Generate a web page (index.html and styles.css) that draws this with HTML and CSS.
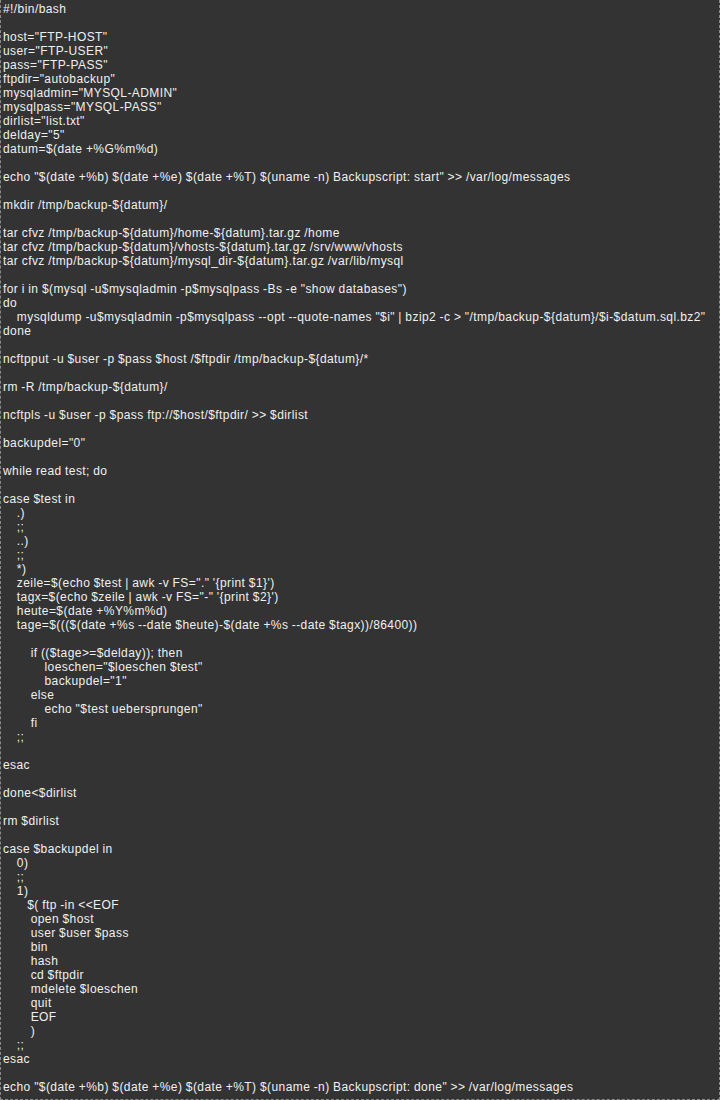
FILE: index.html
```html
<!DOCTYPE html>
<html>
<head>
<meta charset="utf-8">
<link rel="stylesheet" href="styles.css">
</head>
<body>
<div class="code-box"><pre class="code">#!/bin/bash

host="FTP-HOST"
user="FTP-USER"
pass="FTP-PASS"
ftpdir="autobackup"
mysqladmin="MYSQL-ADMIN"
mysqlpass="MYSQL-PASS"
dirlist="list.txt"
delday="5"
datum=$(date +%G%m%d)

echo "$(date +%b) $(date +%e) $(date +%T) $(uname -n) Backupscript: start" &gt;&gt; /var/log/messages

mkdir /tmp/backup-${datum}/

tar cfvz /tmp/backup-${datum}/home-${datum}.tar.gz /home
tar cfvz /tmp/backup-${datum}/vhosts-${datum}.tar.gz /srv/www/vhosts
tar cfvz /tmp/backup-${datum}/mysql_dir-${datum}.tar.gz /var/lib/mysql

for i in $(mysql -u$mysqladmin -p$mysqlpass -Bs -e "show databases")
do
    mysqldump -u$mysqladmin -p$mysqlpass --opt --quote-names "$i" | bzip2 -c &gt; "/tmp/backup-${datum}/$i-$datum.sql.bz2"
done

ncftpput -u $user -p $pass $host /$ftpdir /tmp/backup-${datum}/*

rm -R /tmp/backup-${datum}/

ncftpls -u $user -p $pass ftp://$host/$ftpdir/ &gt;&gt; $dirlist

backupdel="0"

while read test; do

case $test in
    .)
    ;;
    ..)
    ;;
    *)
    zeile=$(echo $test | awk -v FS="." '{print $1}')
    tagx=$(echo $zeile | awk -v FS="-" '{print $2}')
    heute=$(date +%Y%m%d)
    tage=$((($(date +%s --date $heute)-$(date +%s --date $tagx))/86400))

        if (($tage&gt;=$delday)); then
            loeschen="$loeschen $test"
            backupdel="1"
        else
            echo "$test uebersprungen"
        fi
    ;;

esac

done&lt;$dirlist

rm $dirlist

case $backupdel in
    0)
    ;;
    1)
       $( ftp -in &lt;&lt;EOF
        open $host
        user $user $pass
        bin
        hash
        cd $ftpdir
        mdelete $loeschen
        quit
        EOF
        )
    ;;
esac

echo "$(date +%b) $(date +%e) $(date +%T) $(uname -n) Backupscript: done" &gt;&gt; /var/log/messages</pre></div>
</body>
</html>
```

FILE: styles.css
```css
html, body {
  margin: 0;
  padding: 0;
  background: #333333;
}

.code-box {
  width: 718px;
  height: 1099px;
  border-left: 1px dashed #8a8a8a;
  border-right: 1px dashed #8a8a8a;
  border-bottom: 1px dashed #8a8a8a;
  background: #333333;
  overflow: hidden;
}

.code {
  margin: 0;
  padding: 2px 0 0 2px;
  font-family: "Liberation Sans", Arial, sans-serif;
  font-size: 12px;
  line-height: 14px;
  letter-spacing: 0.42px;
  word-spacing: -0.3px;
  color: #f0f0f0;
  white-space: pre;
}
```
